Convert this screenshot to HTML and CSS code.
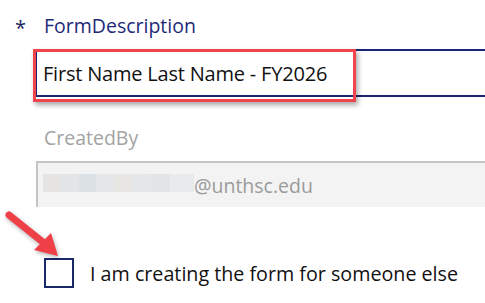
FILE: index.html
```html
<!DOCTYPE html>
<html>
<head>
<meta charset="utf-8">
<link rel="stylesheet" href="styles.css">
</head>
<body>
<div class="form">
  <div class="field">
    <div class="label-row"><span class="req">*</span><span class="label">FormDescription</span></div>
    <div class="input-wrap">
      <div class="input"><span class="value">First Name Last Name - FY2026</span></div>
      <div class="highlight"></div>
    </div>
  </div>
  <div class="field ro-field">
    <div class="label-row"><span class="req"></span><span class="label muted">CreatedBy</span></div>
    <div class="input ro">
      <span class="blur"><i class="b1"></i><i class="b2"></i><i class="b3"></i><i class="b4"></i><i class="b5"></i><i class="b6"></i><i class="b7"></i><i class="b8"></i></span><span class="email">@unthsc.edu</span>
    </div>
  </div>
  <div class="check-row">
    <span class="box"></span>
    <span class="check-label">I am creating the form for someone else</span>
  </div>
  <svg class="arrow" width="70" height="70" viewBox="0 0 70 70">
    <line x1="9" y1="15" x2="44" y2="43" stroke="#ef4048" stroke-width="7" stroke-linecap="round"/>
    <polygon points="58,56 34,50 51,33" fill="#ef4048"/>
  </svg>
</div>
</body>
</html>
```

FILE: styles.css
```css
html, body {
  margin: 0;
  padding: 0;
  background: #ffffff;
  overflow: hidden;
}
body {
  width: 485px;
  height: 303px;
  font-family: "Open Sans", "Noto Sans", sans-serif;
}
.form {
  position: relative;
  width: 560px;
  padding-top: 12px;
}
.label-row {
  display: flex;
  align-items: center;
  height: 28px;
}
.req {
  width: 44px;
  padding-left: 15px;
  box-sizing: border-box;
  font-size: 20px;
  color: #1a1f5c;
  line-height: 28px;
  padding-top: 4px;
}
.label {
  font-size: 19.5px;
  color: #1e2a78;
  line-height: 28px;
}
.label.muted {
  color: #a3a3a3;
}
.input-wrap {
  position: relative;
  margin-top: 9px;
  margin-left: 36px;
}
.input {
  box-sizing: border-box;
  height: 48px;
  border-top: 2px solid #1a2470;
  border-bottom: 2px solid #1a2470;
  border-left: 1px solid #1a2470;
  padding-left: 6px;
  font-size: 19.5px;
  color: #111111;
  display: flex;
  align-items: center;
  background: #fff;
}
.value {
  font-size: 20px;
  letter-spacing: -0.2px;
}
.highlight {
  position: absolute;
  left: -3px;
  top: 0;
  width: 323px;
  height: 53px;
  box-sizing: border-box;
  border: 3px solid #f2444c;
  box-shadow: 2px 3px 5px rgba(0, 0, 0, 0.35);
}
.ro-field {
  margin-top: 27px;
}
.input.ro {
  margin-top: 9px;
  margin-left: 36px;
  height: 46px;
  border: none;
  border-top: 2px solid #c4c4c4;
  border-left: 2px solid #c4c4c4;
  background: #f3f3f3;
  padding-left: 5px;
  color: #9b9b9b;
}
.blur {
  display: flex;
  height: 18px;
  margin-top: -4px;
}
.blur i {
  display: block;
  height: 18px;
}
.b1 { width: 18px; background: #e6e5e4; }
.b2 { width: 17px; background: #e4e5e6; }
.b3 { width: 18px; background: #dde2e6; }
.b4 { width: 18px; background: #e5e6e8; }
.b5 { width: 18px; background: #e8e6e2; }
.b6 { width: 19px; background: #e4e6e8; }
.b7 { width: 19px; background: #e2e4e6; }
.b8 { width: 24px; background: #e8ebec; }
.email {
  font-size: 19.5px;
  color: #9b9b9b;
}
.check-row {
  display: flex;
  align-items: center;
  margin-top: 51px;
  margin-left: 44px;
}
.box {
  width: 30px;
  height: 30px;
  box-sizing: border-box;
  border: 2px solid #1b2868;
  background: #fff;
  margin-right: 16px;
}
.check-label {
  font-size: 19.7px;
  color: #111111;
}
.arrow {
  position: absolute;
  left: 0;
  top: 200px;
  filter: drop-shadow(1px 2px 2px rgba(0,0,0,0.3));
}
```
